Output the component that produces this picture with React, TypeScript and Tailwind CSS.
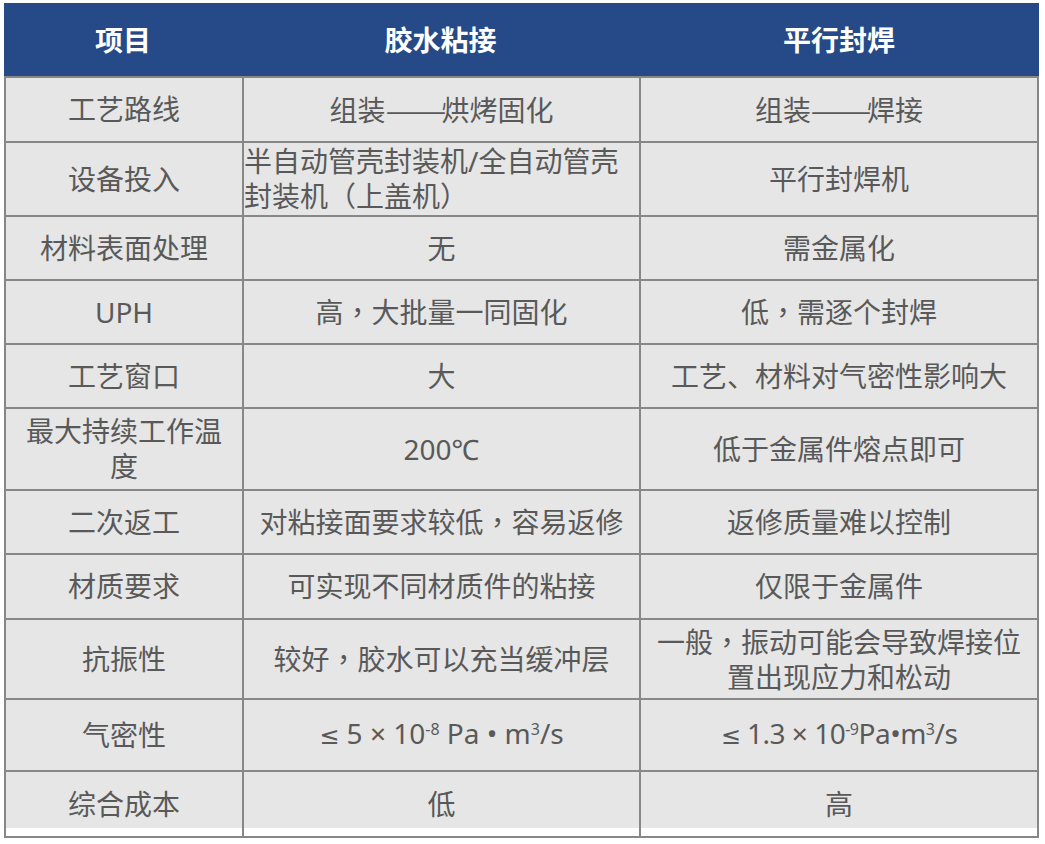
import React from 'react';

type Row = { item: React.ReactNode; glue: React.ReactNode; weld: React.ReactNode; leftAlign?: boolean };

// full-width comma with centred glyph, as in the source
const Comma = () => <span style={{ fontFamily: '"Noto Sans CJK TC", sans-serif' }}>，</span>;
const Dash = () => (
    <span className="inline-block w-[56px] text-center align-baseline">
        <span className="inline-block scale-x-[1.3] tracking-[-3px]" style={{ fontFamily: '"Noto Sans CJK SC", sans-serif' }}>——</span>
    </span>
);
const Le = () => <span style={{ fontFamily: '"DejaVu Sans", sans-serif' }} className="text-[24px]">≤</span>;

const rows: Row[] = [
    { item: '工艺路线', glue: <>组装<Dash />烘烤固化</>, weld: <>组装<Dash />焊接</> },
    { item: '设备投入', glue: '半自动管壳封装机/全自动管壳封装机（上盖机）', weld: '平行封焊机', leftAlign: true },
    { item: '材料表面处理', glue: '无', weld: '需金属化' },
    { item: 'UPH', glue: <>高<Comma />大批量一同固化</>, weld: <>低<Comma />需逐个封焊</> },
    { item: '工艺窗口', glue: '大', weld: '工艺、材料对气密性影响大' },
    { item: '最大持续工作温度', glue: '200℃', weld: '低于金属件熔点即可' },
    { item: '二次返工', glue: <>对粘接面要求较低<Comma />容易返修</>, weld: '返修质量难以控制' },
    { item: '材质要求', glue: '可实现不同材质件的粘接', weld: '仅限于金属件' },
    { item: '抗振性', glue: <>较好<Comma />胶水可以充当缓冲层</>, weld: <>一般<Comma />振动可能会导致焊接位置出现应力和松动</> },
    {
        item: '气密性',
        glue: (
            <>
                <Le /> 5 × 10<sup className="text-[16px] -top-[9px]">-8</sup> Pa • m<sup className="text-[16px] -top-[9px]">3</sup>/s
            </>
        ),
        weld: (
            <span className="tracking-[-0.5px]">
                <Le /> 1.3 × 10<sup className="text-[16px] -top-[9px]">-9</sup>Pa•m<sup className="text-[16px] -top-[9px]">3</sup>/s
            </span>
        ),
    },
    { item: '综合成本', glue: '低', weld: '高' },
];

export default function App() {
    return (
        <div
            className="min-h-screen bg-white pt-[3px] pl-[4px]"
            style={{ fontFamily: '"Noto Sans", "Noto Sans CJK SC", sans-serif' }}
        >
            <div className="w-[1035px]">
                {/* Header */}
                <div className="grid grid-cols-[238px_397px_400px] h-[73px] bg-[#254a87] text-white text-[28px] font-bold">
                    <div className="flex items-center justify-center">项目</div>
                    <div className="flex items-center justify-center">胶水粘接</div>
                    <div className="flex items-center justify-center">平行封焊</div>
                </div>

                {/* Body */}
                <div className="grid grid-cols-[236px_395px_396px] grid-rows-[63px_72px_62px_62px_62px_80px_62px_63px_78px_70px_64px] gap-[2px] p-[2px] bg-[#878787] text-[28px] leading-[35px] text-[#595959]">
                    {rows.map((r, i) => {
                        const last = i === rows.length - 1;
                        const base = `bg-[#e6e6e6] flex items-center ${last ? 'shadow-[inset_0_-8px_0_#ffffff]' : ''}`;
                        return (
                            <React.Fragment key={i}>
                                <div className={`${base} justify-center px-3`}>
                                    <div className="text-center">{r.item}</div>
                                </div>
                                <div className={`${base} ${r.leftAlign ? 'justify-start' : 'justify-center px-2'}`}>
                                    <div className={r.leftAlign ? 'text-left' : 'text-center'}>{r.glue}</div>
                                </div>
                                <div className={`${base} justify-center px-2`}>
                                    <div className="text-center">{r.weld}</div>
                                </div>
                            </React.Fragment>
                        );
                    })}
                </div>
            </div>
        </div>
    );
}
